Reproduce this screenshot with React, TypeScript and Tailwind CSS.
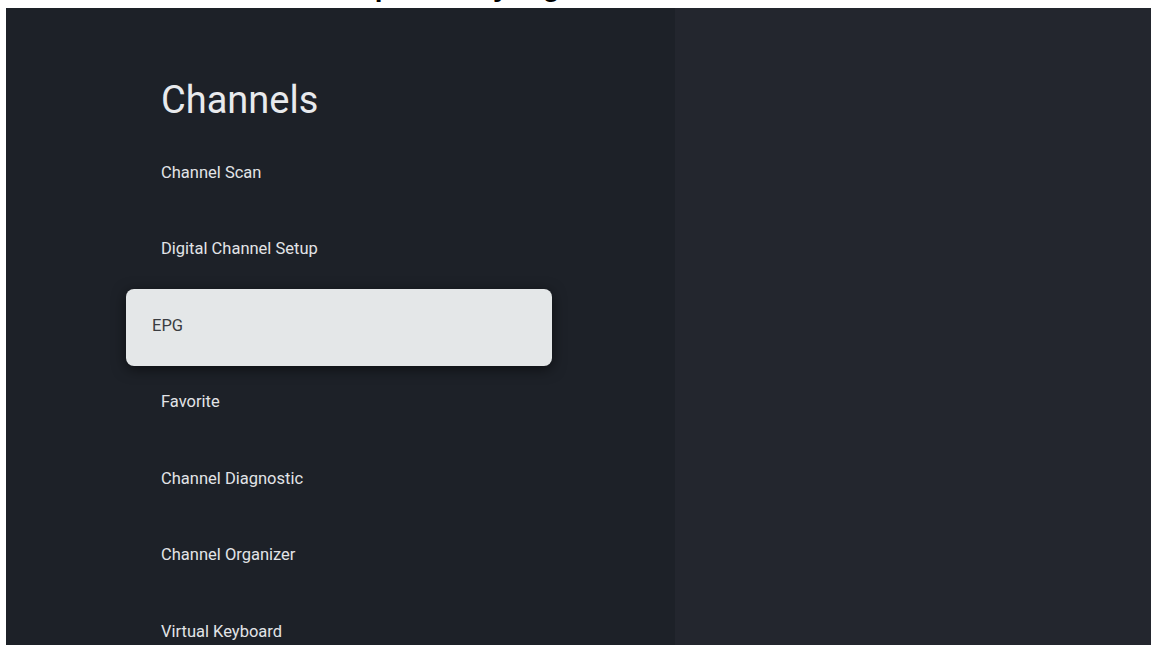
import React from "react";

const items = [
  "Channel Scan",
  "Digital Channel Setup",
  "EPG",
  "Favorite",
  "Channel Diagnostic",
  "Channel Organizer",
  "Virtual Keyboard",
];

export default function App() {
  return (
    <div className="w-[1151px] h-[645px] overflow-hidden bg-white flex flex-col">
      <div className="h-[8px] shrink-0 overflow-hidden">
        <p
          className="mt-[-27px] pl-[314px] text-[28px] leading-[28px] font-bold text-black whitespace-nowrap"
          style={{ fontFamily: '"Liberation Sans", Arial, sans-serif' }}
        >
          Setup and Key Signal
        </p>
      </div>
      <div
        className="flex flex-1 ml-[6px] min-h-0"
        style={{ fontFamily: 'Roboto, "Noto Sans", sans-serif' }}
      >
        <div className="w-[669px] shrink-0 bg-[#1d2128] pl-[129px] pt-[70px] overflow-hidden">
          <div className="w-[408px]">
            <h1 className="pl-[26px] text-[38px] leading-[44px] font-normal text-[#e8eaed]">
              Channels
            </h1>
            <div className="mt-[14px] flex flex-col">
              {items.map((label) =>
                label === "EPG" ? (
                  <div
                    key={label}
                    className="h-[76.5px] shrink-0 -mx-[9px] flex items-center pb-[3px] pl-[26px] rounded-[8px] bg-[#e4e7e8] shadow-[0_3px_14px_rgba(0,0,0,0.55)]"
                  >
                    <span className="text-[16.5px] leading-[20px] font-normal text-[#3a3d41]">{label}</span>
                  </div>
                ) : (
                  <div
                    key={label}
                    className="h-[76.5px] shrink-0 flex items-center pb-[3px] pl-[26px]"
                  >
                    <span className="text-[16.5px] leading-[20px] font-normal text-[#e2e4e7]">{label}</span>
                  </div>
                )
              )}
            </div>
          </div>
        </div>
        <div className="flex-1 bg-[#23262e]" />
      </div>
    </div>
  );
}
